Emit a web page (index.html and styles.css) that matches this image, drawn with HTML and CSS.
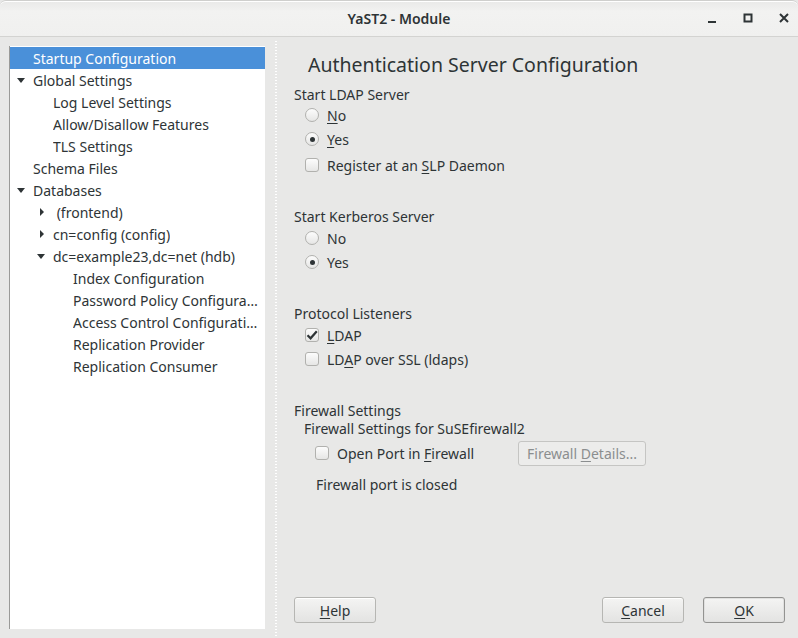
FILE: index.html
```html
<!DOCTYPE html>
<html>
<head>
<meta charset="utf-8">
<link rel="stylesheet" href="styles.css">
</head>
<body>
<div class="window">
  <div class="titlebar">
    <div class="title">YaST2 - Module</div>
    <div class="controls">
      <svg class="ctl" width="12" height="12" viewBox="0 0 12 12"><rect x="2" y="9" width="8" height="2" fill="#2e3436"/></svg>
      <svg class="ctl" width="12" height="12" viewBox="0 0 12 12"><rect x="2.5" y="2.5" width="7" height="7" fill="none" stroke="#2e3436" stroke-width="2"/></svg>
      <svg class="ctl" width="12" height="12" viewBox="0 0 12 12"><path d="M2 2L10 10M10 2L2 10" stroke="#2e3436" stroke-width="2"/></svg>
    </div>
  </div>
  <div class="main">
    <div class="leftpane">
      <div class="tree">
        <div class="row l0 selected"><span class="exp"></span><span class="txt">Startup Configuration</span></div>
        <div class="row l0"><span class="exp down"></span><span class="txt">Global Settings</span></div>
        <div class="row l1"><span class="exp"></span><span class="txt">Log Level Settings</span></div>
        <div class="row l1"><span class="exp"></span><span class="txt">Allow/Disallow Features</span></div>
        <div class="row l1"><span class="exp"></span><span class="txt">TLS Settings</span></div>
        <div class="row l0"><span class="exp"></span><span class="txt">Schema Files</span></div>
        <div class="row l0"><span class="exp down"></span><span class="txt">Databases</span></div>
        <div class="row l1"><span class="exp right"></span><span class="txt">&nbsp;(frontend)</span></div>
        <div class="row l1"><span class="exp right"></span><span class="txt">cn=config (config)</span></div>
        <div class="row l1"><span class="exp down"></span><span class="txt">dc=example23,dc=net (hdb)</span></div>
        <div class="row l2"><span class="exp"></span><span class="txt">Index Configuration</span></div>
        <div class="row l2"><span class="exp"></span><span class="txt">Password Policy Configuration</span></div>
        <div class="row l2"><span class="exp"></span><span class="txt">Access Control Configuration</span></div>
        <div class="row l2"><span class="exp"></span><span class="txt">Replication Provider</span></div>
        <div class="row l2"><span class="exp"></span><span class="txt">Replication Consumer</span></div>
      </div>
    </div>
    <div class="splitter"></div>
    <div class="rightpane">
      <h1 class="heading">Authentication Server Configuration</h1>

      <div class="glabel g-first">Start LDAP Server</div>
      <div class="opt"><span class="radio"></span><span><u>N</u>o</span></div>
      <div class="opt"><span class="radio on"></span><span><u>Y</u>es</span></div>
      <div class="opt opt-gap"><span class="check"></span><span>Register at an <u>S</u>LP Daemon</span></div>

      <div class="glabel g-next">Start Kerberos Server</div>
      <div class="opt"><span class="radio"></span><span>No</span></div>
      <div class="opt"><span class="radio on"></span><span>Yes</span></div>

      <div class="glabel g-next2">Protocol Listeners</div>
      <div class="opt opt-first"><span class="check on"><svg width="12" height="12" viewBox="0 0 12 12"><path d="M1.5 6.2L4.6 9.3L10.8 2.2" fill="none" stroke="#2e3436" stroke-width="2.2"/></svg></span><span><u>L</u>DAP</span></div>
      <div class="opt"><span class="check"></span><span>LD<u>A</u>P over SSL (ldaps)</span></div>

      <div class="glabel g-fw">Firewall Settings</div>
      <div class="glabel sub">Firewall Settings for SuSEfirewall2</div>
      <div class="fwrow">
        <div class="opt fwopt"><span class="check"></span><span>Open Port in <u>F</u>irewall</span></div>
        <div class="btn disabled"><span>Firewall <u>D</u>etails...</span></div>
      </div>
      <div class="fwstatus">Firewall port is closed</div>

      <div class="buttons">
        <div class="btn wide"><span><u>H</u>elp</span></div>
        <div class="spacer"></div>
        <div class="btn wide"><span><u>C</u>ancel</span></div>
        <div class="btn wide default"><span><u>O</u>K</span></div>
      </div>
    </div>
  </div>
</div>
</body>
</html>
```

FILE: styles.css
```css
* { box-sizing: border-box; }
html, body {
  margin: 0;
  padding: 0;
  width: 798px;
  height: 638px;
  overflow: hidden;
  background: #e8e8e7;
  font-family: "Noto Sans", "Open Sans", sans-serif;
  font-size: 14px;
  color: #2e3436;
}
.window {
  width: 798px;
  height: 638px;
  display: flex;
  flex-direction: column;
}
.titlebar {
  height: 37px;
  flex: none;
  position: relative;
  display: flex;
  align-items: center;
  justify-content: center;
  background: linear-gradient(#e9e9e8, #f2f2f1 30%, #f0f0ef);
  border-bottom: 1px solid #d3d3d1;
  border-radius: 6px 6px 0 0;
  box-shadow: inset 0 1px 0 #ffffff;
  border-top: 1px solid #cfcfcd;
}
.title {
  font-weight: 600;
  font-size: 14px;
  color: #2e3436;
}
.controls {
  position: absolute;
  right: 8px;
  top: 11px;
  display: flex;
  gap: 24px;
}
.ctl { display: block; }
.main {
  flex: 1;
  display: flex;
  min-height: 0;
}
.leftpane {
  width: 273px;
  flex: none;
  padding: 9px 8px 9px 9px;
  display: flex;
}
.tree {
  flex: 1;
  background: #ffffff;
  border-left: 1px solid #9a9a98;
  padding-top: 1px;
  overflow: hidden;
}
.row {
  height: 22px;
  display: flex;
  align-items: center;
  white-space: nowrap;
  padding-right: 5px;
}
.row.selected {
  background: #4a90d9;
  color: #ffffff;
}
.row.l0 { padding-left: 7px; }
.row.l1 { padding-left: 27px; }
.row.l2 { padding-left: 47px; }
.exp {
  width: 16px;
  height: 22px;
  flex: none;
  position: relative;
}
.exp.down::before {
  content: "";
  position: absolute;
  left: 0;
  top: 9px;
  border-left: 4px solid transparent;
  border-right: 4px solid transparent;
  border-top: 5px solid #2e3436;
}
.exp.right::before {
  content: "";
  position: absolute;
  left: 3px;
  top: 7px;
  border-top: 4px solid transparent;
  border-bottom: 4px solid transparent;
  border-left: 4px solid #2e3436;
}
.txt {
  overflow: hidden;
  text-overflow: ellipsis;
  min-width: 0;
}
.splitter {
  width: 4px;
  flex: none;
  margin: 3px 0 0 0;
  background-image: radial-gradient(circle, #ffffff 0.8px, transparent 1.1px);
  background-size: 2px 3px;
  background-repeat: repeat-y;
  background-position: 2px 0;
}
.rightpane {
  flex: 1;
  display: flex;
  flex-direction: column;
  padding: 14px 13px 15px 17px;
}
.heading {
  margin: 0 0 7px 14px;
  font-size: 19.5px;
  font-weight: 400;
  line-height: 28px;
  color: #2e3436;
}
.glabel {
  line-height: 18px;
  height: 18px;
}
.g-first { height: 17px; }
.g-next { margin-top: 31px; }
.g-next2 { margin-top: 31px; }
.g-fw { margin-top: 31px; }
.sub { margin-left: 10px; }
.opt {
  height: 24px;
  display: flex;
  align-items: center;
  padding-left: 11px;
}
.opt-gap { margin-top: 2px; }
.opt-first { margin-top: 0; }
.radio, .check {
  width: 14px;
  height: 14px;
  flex: none;
  margin-right: 8px;
  border: 1px solid #b1b1ae;
  background: linear-gradient(#fcfcfc, #e6e6e5);
  display: flex;
  align-items: center;
  justify-content: center;
}
.radio { border-radius: 50%; }
.radio.on::after {
  content: "";
  width: 5px;
  height: 5px;
  border-radius: 50%;
  background: #2e3436;
}
.check { border-radius: 3px; }
.check svg { display: block; margin-top: -1px; }
u {
  text-decoration: underline;
  text-underline-offset: 2px;
  text-decoration-thickness: 1px;
}
.fwrow {
  display: flex;
  align-items: center;
  margin-top: 3px;
  height: 24px;
}
.fwopt { padding-left: 21px; width: 224px; }
.btn {
  height: 26px;
  display: flex;
  align-items: center;
  justify-content: center;
  border: 1px solid #b6b6b3;
  border-radius: 3px;
  background: linear-gradient(#f4f4f3, #e3e3e2);
  color: #2e3436;
  box-shadow: inset 0 1px 0 #ffffff;
}
.btn.disabled {
  width: 128px;
  height: 25px;
  color: #8b8e8f;
  background: #ececeb;
  border-color: #c5c5c3;
  box-shadow: none;
}
.fwstatus {
  margin-top: 11px;
  margin-left: 22px;
  line-height: 18px;
}
.buttons {
  margin-top: auto;
  display: flex;
  align-items: center;
}
.btn.wide { width: 82px; }
.btn.default { border-color: #939391; margin-left: 19px; box-shadow: inset 0 0 0 1px #e0e0df; }
.spacer { flex: 1; }
```
